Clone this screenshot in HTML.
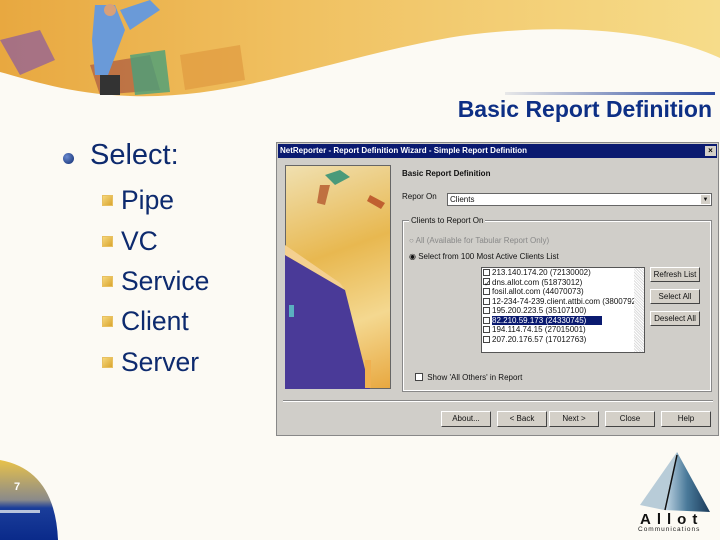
<!DOCTYPE html>
<html><head><meta charset="utf-8"><style>
*{margin:0;padding:0;box-sizing:border-box}
body{width:720px;height:540px;position:relative;overflow:hidden;background:#fcfaf4;font-family:"Liberation Sans",sans-serif}
.abs{position:absolute}
.dlg{left:276px;top:142px;width:443px;height:294px;background:#d0cec9;border:1px solid #888;font-size:8px;color:#111}
.tb{position:absolute;left:1px;top:1px;right:1px;height:14px;background:#0a1a70;color:#fff;font-weight:bold;font-size:8px;line-height:14px;padding-left:2px}
.btn{position:absolute;height:16px;background:#d4d0c8;border:1px solid;border-color:#fff #444 #444 #fff;font-size:8px;text-align:center;line-height:14px}
.list div{height:9.5px;line-height:9.5px;white-space:nowrap;font-size:8px}
.cb{display:inline-block;width:7px;height:7px;border:1px solid #444;background:#fff;vertical-align:-1px;margin:0 2px 0 1px}
.sub{position:absolute;left:102px;font-size:26.5px;color:#0d2a6e;line-height:30px}
.sq{position:absolute;left:-19px;top:10px;width:11px;height:11px;background:linear-gradient(135deg,#f6d77a,#d9a530);border:1px solid #e8c060}
</style></head><body>
<svg class="abs" style="left:0;top:0" width="720" height="540">
<defs>
<linearGradient id="ban" x1="0" x2="1" y1="0" y2="0"><stop offset="0" stop-color="#e8a840"/><stop offset=".4" stop-color="#f0c060"/><stop offset="1" stop-color="#f6dc8a"/></linearGradient>
<linearGradient id="cr" x1="0" y1="0" x2="0" y2="1"><stop offset="0" stop-color="#e8c24a"/><stop offset=".5" stop-color="#8a8a8a"/><stop offset=".6" stop-color="#1a3d9a"/><stop offset="1" stop-color="#0a2a8a"/></linearGradient>
<linearGradient id="ln" x1="0" x2="1"><stop offset="0" stop-color="#e8e8e8"/><stop offset="1" stop-color="#2b4aa0"/></linearGradient>
<linearGradient id="lg" x1="0" x2="1"><stop offset="0" stop-color="#c8dbe8"/><stop offset=".5" stop-color="#4a7a9a"/><stop offset="1" stop-color="#1a3a5a"/></linearGradient>
</defs>
<path d="M0 0H720V58C660 30 560 22 460 36C340 55 240 100 130 96C70 94 30 80 0 72Z" fill="url(#ban)"/>
<path d="M0 40 L40 30 L55 60 L20 75Z" fill="#8a5aa0" opacity=".7"/>
<path d="M90 65 L150 55 L160 90 L100 95Z" fill="#a04a40" opacity=".6"/>
<path d="M130 55 L165 50 L170 92 L135 95Z" fill="#4aa07a" opacity=".8"/>
<path d="M180 55 L240 45 L245 80 L185 90Z" fill="#e09a40" opacity=".7"/>
<path d="M95 5 L115 5 L125 30 L108 75 L95 75 L92 40Z" fill="#6a9ad8"/>
<path d="M120 10 L150 0 L160 10 L130 30Z" fill="#6a9ad8"/>
<circle cx="110" cy="10" r="6" fill="#d8a078"/>
<rect x="100" y="75" width="20" height="20" fill="#333"/>
<path d="M0 460 Q55 470 58 540 H0Z" fill="url(#cr)"/>
<rect x="0" y="510" width="40" height="3" fill="#b8c4dc"/>
<rect x="505" y="92" width="210" height="3" fill="url(#ln)"/>
<path d="M677 452 L664 510 L710 512Z" fill="url(#lg)"/>
<path d="M677 452 L640 505 L664 510Z" fill="#b8ccd8"/>
<line x1="677" y1="455" x2="665" y2="510" stroke="#111" stroke-width="1.5"/>
</svg>
<div class="abs" style="left:14px;top:481px;color:#fff;font-weight:bold;font-size:11px">7</div>
<div class="abs" style="left:640px;top:511px;font-weight:bold;font-size:15px;letter-spacing:6px;color:#111">Allot</div>
<div class="abs" style="left:638px;top:526px;font-size:6.5px;letter-spacing:1px;color:#222">Communications</div>
<div class="abs" style="right:8px;top:96px;font-weight:bold;font-size:23px;color:#0d2f85">Basic Report Definition</div>
<div class="abs" style="left:63px;top:153px;width:11px;height:11px;border-radius:50%;background:radial-gradient(circle at 35% 35%,#6a8ad0,#0d2a6e)"></div>
<div class="abs" style="left:90px;top:139px;font-size:29px;color:#0d2a6e">Select:</div>
<div class="sub" style="top:185px;left:121px"><span class="sq"></span>Pipe</div>
<div class="sub" style="top:226px;left:121px"><span class="sq"></span>VC</div>
<div class="sub" style="top:266px;left:121px"><span class="sq"></span>Service</div>
<div class="sub" style="top:306px;left:121px"><span class="sq"></span>Client</div>
<div class="sub" style="top:347px;left:121px"><span class="sq"></span>Server</div>

<div class="dlg abs">
<div class="tb">NetReporter - Report Definition Wizard - Simple Report Definition<span style="position:absolute;right:1px;top:2px;width:11px;height:10px;background:#d4d0c8;color:#000;font-size:8px;line-height:10px;text-align:center">×</span></div>
<div class="abs" style="left:8px;top:22px;width:106px;height:224px;border:1px solid #666;background:linear-gradient(160deg,#f0e0b0,#e8b850 40%,#f4d890 70%,#e8a840)"></div>
<svg class="abs" style="left:8px;top:22px" width="106" height="224"><path d="M0 90 L60 125 L85 224 L0 224Z" fill="#4a3a98"/><path d="M0 90 L60 125 L55 118 L0 80Z" fill="#f4d090"/><rect x="4" y="140" width="5" height="12" fill="#5ab0c0"/><rect x="80" y="195" width="6" height="28" fill="#f0b050"/><path d="M40 10 L55 5 L65 12 L50 20Z" fill="#4a9a7a"/><path d="M35 20 L45 20 L40 40 L32 38Z" fill="#c07040"/><path d="M85 30 L100 38 L96 44 L82 36Z" fill="#c06030"/></svg>
<div class="abs" style="left:125px;top:26px;font-weight:bold">Basic Report Definition</div>
<div class="abs" style="left:125px;top:49px">Repor On</div>
<div class="abs" style="left:170px;top:50px;width:265px;height:13px;background:#fff;border:1px solid #666;padding-left:2px;line-height:11px">Clients<span style="position:absolute;right:1px;top:1px;width:9px;height:9px;background:#d4d0c8;font-size:6px;text-align:center">▼</span></div>
<div class="abs" style="left:126px;top:78px;width:308px;height:170px;border:1px solid #fff;outline:1px solid #888"></div>
<div class="abs" style="left:132px;top:73px;background:#d0cec9;padding:0 2px">Clients to Report On</div>
<div class="abs" style="left:132px;top:93px;color:#888">○ All (Available for Tabular Report Only)</div>
<div class="abs" style="left:132px;top:109px">◉ Select from 100 Most Active Clients List</div>
<div class="abs list" style="left:204px;top:124px;width:164px;height:86px;background:#fff;border:1px solid #555;overflow:hidden">
<div><span class="cb"></span>213.140.174.20 (72130002)</div>
<div><span class="cb">✓</span>dns.allot.com (51873012)</div>
<div><span class="cb"></span>fosil.allot.com (44070073)</div>
<div><span class="cb"></span>12-234-74-239.client.attbi.com (3800792</div>
<div><span class="cb"></span>195.200.223.5 (35107100)</div>
<div><span class="cb"></span><span style="background:#0a1a70;color:#fff;padding-right:16px">82.210.59.173 (24330745)</span></div>
<div><span class="cb"></span>194.114.74.15 (27015001)</div>
<div><span class="cb"></span>207.20.176.57 (17012763)</div>
<div class="abs" style="right:0;top:0;width:10px;height:84px;background:repeating-linear-gradient(45deg,#ddd 0 1px,#fff 1px 2px)"></div>
</div>
<div class="btn" style="left:373px;top:124px;width:50px;height:15px">Refresh List</div>
<div class="btn" style="left:373px;top:146px;width:50px;height:15px">Select All</div>
<div class="btn" style="left:373px;top:168px;width:50px;height:15px">Deselect All</div>
<div class="abs" style="left:137px;top:230px"><span class="cb" style="width:8px;height:8px"></span> Show 'All Others' in Report</div>
<div class="abs" style="left:6px;top:257px;width:430px;border-top:1px solid #888;border-bottom:1px solid #fff"></div>
<div class="btn" style="left:164px;top:268px;width:50px">About...</div>
<div class="btn" style="left:220px;top:268px;width:50px">&lt; Back</div>
<div class="btn" style="left:272px;top:268px;width:50px">Next &gt;</div>
<div class="btn" style="left:328px;top:268px;width:50px">Close</div>
<div class="btn" style="left:384px;top:268px;width:50px">Help</div>
</div>
</body></html>
